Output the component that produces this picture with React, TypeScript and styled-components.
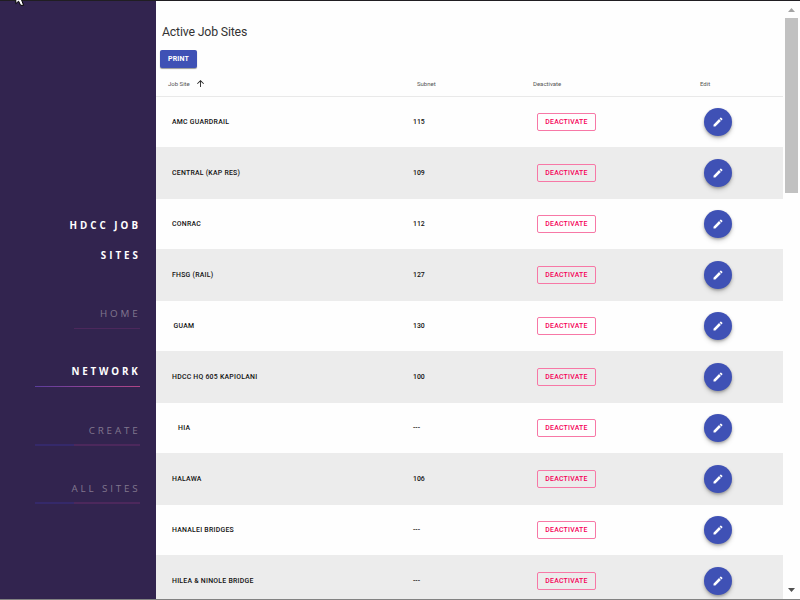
import React from "react";
import styled, { createGlobalStyle } from "styled-components";

const GlobalStyle = createGlobalStyle`
  * { box-sizing: border-box; }
  body { margin: 0; overflow: hidden; background: #fefefe; font-family: Roboto, "Liberation Sans", sans-serif; }
`;

const Page = styled.div`
  display: flex;
  width: 800px;
  height: 600px;
  overflow: hidden;
  border-top: 1px solid #201e22;
  border-bottom: 1px solid #828282;
  background: #fefefe;
`;

const Sidebar = styled.nav`
  flex: 0 0 156px;
  display: flex;
  flex-direction: column;
  align-items: flex-end;
  padding: 210px 16px 0 0;
  background: #32244f;
  font-family: "Open Sans", "Noto Sans", sans-serif;
  text-align: right;
`;

const Brand = styled.div`
  width: 90px;
  height: 87px;
  line-height: 30px;
  font-size: 9.8px;
  font-weight: 700;
  letter-spacing: 3px;
  margin-right: -1px;
  color: #fff;
`;

type LinkKind = "active" | "short" | "faded";

const underlines: Record<LinkKind, string> = {
  active: "linear-gradient(90deg, #5b3d9c, #8a4297 45%, #b04585) bottom / 100% 1px",
  short: "linear-gradient(90deg, transparent 37%, #4c285c 37%) bottom / 100% 1px",
  faded: "linear-gradient(90deg, #35296a 37%, #4c285c 37%) bottom / 100% 2px",
};

const NavItem = styled.a<{ $kind: LinkKind }>`
  display: block;
  width: 105px;
  height: 31px;
  margin-bottom: 27.3px;
  padding-top: 8px;
  line-height: 16px;
  white-space: nowrap;
  font-size: 9.8px;
  font-weight: ${(p) => (p.$kind === "active" ? 700 : 400)};
  letter-spacing: ${(p) => (p.$kind === "active" ? 2.8 : 2.85)}px;
  color: ${(p) => (p.$kind === "active" ? "#fff" : "#81778e")};
  background: ${(p) => underlines[p.$kind]} no-repeat;

  span { margin-right: -0.5px; }
`;

const Main = styled.main`
  flex: 0 0 627px;
  overflow: hidden;
`;

const Title = styled.h1`
  height: 49px;
  margin: 0;
  padding: 22.6px 0 0 6px;
  font-size: 12.3px;
  letter-spacing: -0.17px;
  line-height: 17px;
  font-weight: 400;
  color: #333;
`;

const PrintButton = styled.button`
  display: block;
  width: 37px;
  height: 18px;
  margin: 0 0 0 4px;
  padding: 0;
  border: 0;
  border-radius: 2px;
  background: #3f51b5;
  color: #fff;
  font: 700 7px/17px Roboto, sans-serif;
  letter-spacing: 0.15px;
  box-shadow: 0 1px 1px rgba(0, 0, 0, 0.4);
`;

const Columns = styled.div`
  display: grid;
  grid-template-columns: 245px 124px 167px 1fr;
  align-items: center;
`;

const HeaderRow = styled(Columns)`
  height: 29px;
  padding: 2px 0 0 12px;
  border-bottom: 1px solid #e9e9e9;
  font-size: 6px;
  color: #555;
`;

const HeadCell = styled.div<{ $shift?: number }>`
  display: flex;
  align-items: center;
  gap: 7px;
  margin-left: ${(p) => p.$shift ?? 0}px;
`;

const SortArrow = styled.svg`
  margin-top: 1px;
`;

const Row = styled(Columns)`
  height: 50px;
  padding-left: 12px;
  font-size: 6.9px;
  font-weight: 500;
  color: #111;

  &:nth-child(even) {
    height: 52px;
    background: #ececec;
  }
`;

const Cell = styled.div`
  white-space: nowrap;
`;

const NameCell = styled(Cell)<{ $indent: number }>`
  padding-left: ${(p) => p.$indent}px;
  letter-spacing: 0.25px;
`;

const Deactivate = styled.button`
  display: block;
  width: 59px;
  height: 18px;
  padding: 0;
  border: 1px solid #f778a6;
  border-radius: 2px;
  background: transparent;
  color: #f50057;
  font: 500 6.9px/16px Roboto, sans-serif;
  letter-spacing: 0.25px;
`;

const EditButton = styled.button`
  display: flex;
  align-items: center;
  justify-content: center;
  width: 28px;
  height: 28px;
  padding: 0;
  border: 0;
  border-radius: 50%;
  background: #3f51b5;
  box-shadow: 0 1.5px 2.5px rgba(0, 0, 0, 0.25), 0 3px 5px rgba(0, 0, 0, 0.14);
`;

const Scrollbar = styled.div`
  flex: 0 0 17px;
  display: flex;
  flex-direction: column;
  align-items: center;
  padding: 7px 1px 7px 1px;
`;

const Thumb = styled.div`
  width: 13px;
  height: 175px;
  margin: 6px 0 auto;
  background: #c1c1c1;
`;

const Cursor = styled.svg`
  position: absolute;
  left: 15px;
  top: 0;
`;

const sites = [
  { name: "AMC GUARDRAIL", subnet: "115", indent: 4 },
  { name: "CENTRAL (KAP RES)", subnet: "109", indent: 4 },
  { name: "CONRAC", subnet: "112", indent: 4 },
  { name: "FHSG (RAIL)", subnet: "127", indent: 4 },
  { name: "GUAM", subnet: "130", indent: 5.5 },
  { name: "HDCC HQ 605 KAPIOLANI", subnet: "100", indent: 4 },
  { name: "HIA", subnet: "---", indent: 10 },
  { name: "HALAWA", subnet: "106", indent: 4 },
  { name: "HANALEI BRIDGES", subnet: "---", indent: 4 },
  { name: "HILEA & NINOLE BRIDGE", subnet: "---", indent: 4 },
];

const links: { label: string; kind: LinkKind }[] = [
  { label: "HOME", kind: "short" },
  { label: "NETWORK", kind: "active" },
  { label: "CREATE", kind: "faded" },
  { label: "ALL SITES", kind: "faded" },
];

export default function App() {
  return (
    <>
      <GlobalStyle />
      <Page>
        <Sidebar>
          <Brand>HDCC JOB SITES</Brand>
          {links.map((l) => (
            <NavItem key={l.label} $kind={l.kind}>
              <span>{l.label}</span>
            </NavItem>
          ))}
        </Sidebar>
        <Main>
          <Title>Active Job Sites</Title>
          <PrintButton>PRINT</PrintButton>
          <HeaderRow>
            <HeadCell>
              Job Site
              <SortArrow width="7" height="7" viewBox="4 4 16 16" fill="#222">
                <path d="M4 12l1.41 1.41L11 7.83V20h2V7.83l5.58 5.59L20 12l-8-8-8 8z" />
              </SortArrow>
            </HeadCell>
            <HeadCell $shift={4}>Subnet</HeadCell>
            <HeadCell $shift={-4}>Deactivate</HeadCell>
            <HeadCell $shift={-4}>Edit</HeadCell>
          </HeaderRow>
          <div>
            {sites.map((s) => (
              <Row key={s.name}>
                <NameCell $indent={s.indent}>{s.name}</NameCell>
                <Cell>{s.subnet}</Cell>
                <Deactivate>DEACTIVATE</Deactivate>
                <EditButton aria-label="Edit">
                  <svg width="12" height="12" viewBox="0 0 24 24" fill="#fff">
                    <path d="M3 17.25V21h3.75L17.81 9.94l-3.75-3.75L3 17.25zM20.71 7.04c.39-.39.39-1.02 0-1.41l-2.34-2.34c-.39-.39-1.02-.39-1.41 0l-1.83 1.83 3.75 3.75 1.83-1.83z" />
                  </svg>
                </EditButton>
              </Row>
            ))}
          </div>
        </Main>
        <Scrollbar>
          <svg width="7" height="4" viewBox="0 0 7 4"><path d="M3.5 0L7 4H0z" fill="#a3a3a3" /></svg>
          <Thumb />
          <svg width="7" height="4" viewBox="0 0 7 4"><path d="M0 0h7L3.5 4z" fill="#505050" /></svg>
        </Scrollbar>
      </Page>
      <Cursor width="11" height="6" viewBox="0 0 11 6">
        <path d="M.8 -1V3.6L3.6 1.2 5.6 5.3H8.6L6.2 -1z" fill="#fff" stroke="#000" />
      </Cursor>
    </>
  );
}
